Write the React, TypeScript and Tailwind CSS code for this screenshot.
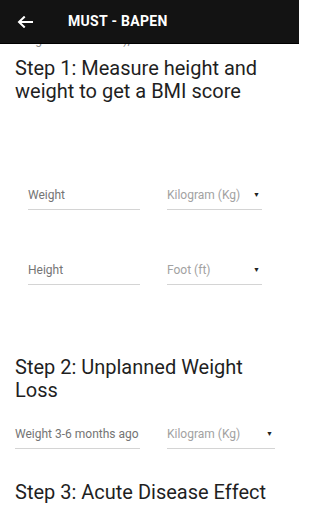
import React from 'react';

const FONT = { fontFamily: 'Roboto, "Noto Sans", sans-serif' };

function BackArrow() {
  return (
    <svg width="16" height="12" viewBox="0 0 16 12" fill="none" className="shrink-0">
      <path d="M15 6H2.5M7 1.2L2 6l5 4.8" stroke="#ffffff" strokeWidth="2" strokeLinecap="square" />
    </svg>
  );
}

function Field({ label, className }: { label: string; className: string }) {
  return (
    <div className={`${className} border-b border-[#d4d4d4] pb-[6px]`}>
      <div className="text-[12px] leading-[16px] text-[#747474] whitespace-nowrap">{label}</div>
    </div>
  );
}

function UnitSelect({ value, className }: { value: string; className: string }) {
  return (
    <div className={`${className} border-b border-[#d4d4d4] pb-[6px] flex items-center justify-between`}>
      <span className="text-[12px] leading-[16px] text-[#a2a2a2] whitespace-nowrap">{value}</span>
      <span className="text-[7px] leading-[16px] text-[#222] pr-[2px]">▼</span>
    </div>
  );
}

function StepTitle({ children, className = '' }: { children: React.ReactNode; className?: string }) {
  return <h2 className={`text-[20px] leading-[23px] text-[#1f1f1f] font-normal ${className}`}>{children}</h2>;
}

export default function App() {
  return (
    <div className="w-[299px] h-[512px] overflow-hidden bg-white" style={FONT}>
      <header className="h-[44px] bg-[#131313] border-b border-black flex items-center">
        <div className="w-[68px] pl-[17px] flex items-center">
          <BackArrow />
        </div>
        <h1 className="text-white text-[14px] font-bold tracking-[0.3px]">MUST - BAPEN</h1>
      </header>

      {/* tail of the previous paragraph, scrolled under the app bar */}
      <div className="h-[5px] overflow-hidden">
        <p className="-mt-[12px] pl-[17px] text-[12px] leading-[16px] text-[#8a8a8a]">weight of Paediatric),</p>
      </div>

      <main className="px-[15px]">
        <StepTitle className="mt-[8px]">
          Step 1: Measure height and
          <br />
          weight to get a BMI score
        </StepTitle>

        <div className="mt-[84px] pl-[13px] flex gap-[27px]">
          <Field label="Weight" className="w-[112px]" />
          <UnitSelect value="Kilogram (Kg)" className="w-[95px]" />
        </div>

        <div className="mt-[52px] pl-[13px] flex gap-[27px]">
          <Field label="Height" className="w-[112px]" />
          <UnitSelect value="Foot (ft)" className="w-[95px]" />
        </div>

        <StepTitle className="mt-[71px]">
          Step 2: Unplanned Weight
          <br />
          Loss
        </StepTitle>

        <div className="mt-[24px] flex gap-[27px]">
          <Field label="Weight 3-6 months ago" className="w-[125px]" />
          <UnitSelect value="Kilogram (Kg)" className="w-[108px]" />
        </div>

        <StepTitle className="mt-[32px]">Step 3: Acute Disease Effect</StepTitle>
      </main>
    </div>
  );
}
